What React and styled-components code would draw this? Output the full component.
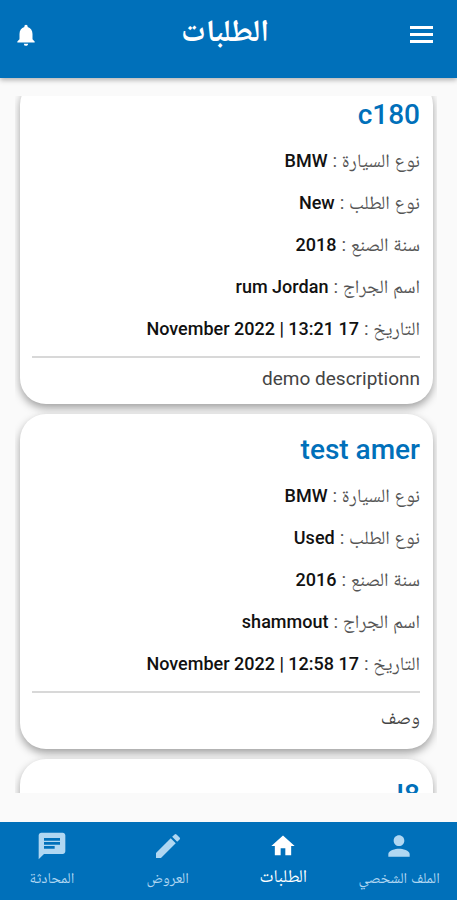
import React, { useLayoutEffect, useRef } from 'react';
import styled, { createGlobalStyle } from 'styled-components';
import { MdNotifications, MdChat, MdEdit, MdHome, MdPerson } from 'react-icons/md';

const GlobalStyle = createGlobalStyle`
  * { box-sizing: border-box; }
  body { margin: 0; background: #fafafa; font-family: Roboto, "Noto Naskh Arabic", "DejaVu Sans", sans-serif; }
`;

const Screen = styled.div`
  display: flex;
  flex-direction: column;
  height: 100vh;
  overflow: hidden;
  background: #fafafa;
`;

const TopBar = styled.header`
  display: grid;
  flex: none;
  grid-template-columns: 1fr auto 1fr;
  align-items: center;
  height: 78px;
  padding: 0 20px 9px 13px;
  background: #0070ba;
  color: #fff;
  box-shadow: 0 2px 5px rgba(0, 0, 0, 0.3);
`;

const IconButton = styled.button`
  display: flex;
  justify-self: ${({ $side }) => $side};
  padding: 0;
  border: 0;
  background: none;
  color: inherit;
  font-size: 26px;
  cursor: pointer;
`;

const PageTitle = styled.h1`
  margin: 0;
  padding-bottom: 8px;
  font-size: 31px;
  line-height: 40px;
  font-weight: 700;
`;

const OrderList = styled.main`
  display: flex;
  flex: 1;
  flex-direction: column;
  gap: 10px;
  min-height: 0;
  margin: 18px 20px 29px 15px;
  padding: 0 4px 0 5px;
  overflow-y: auto;
  scrollbar-width: none;
`;

const Card = styled.article`
  flex: none;
  padding: 12px 13px 12px 12px;
  border-radius: 26px;
  background: #fff;
  box-shadow: 0 4px 8px rgba(0, 0, 0, 0.36);
`;

const CardTitle = styled.h2`
  margin: 0 0 1px;
  font-size: 28px;
  line-height: 48px;
  font-weight: 500;
  color: #0070ba;
`;

const Details = styled.dl`
  margin: 0;
  padding-bottom: 6px;
`;

const Detail = styled.div`
  display: flex;
  align-items: center;
  gap: 5px;
  height: 42px;
  font-size: 18px;
  line-height: 42px;
  white-space: nowrap;
`;

const Label = styled.dt`
  color: #555;
  font-size: 19px;
`;

const Value = styled.dd`
  margin: 0;
  color: #111;
  font-weight: 500;
`;

const Description = styled.p`
  margin: 0;
  padding: ${({ $tall }) => ($tall ? '9px 0 3px' : '8px 0 0')};
  border-top: 2px solid #d8d8d8;
  color: #444;
  font-size: 19px;
  line-height: ${({ $tall }) => ($tall ? 32 : 26)}px;
`;

const BottomBar = styled.nav`
  display: grid;
  flex: none;
  grid-template-columns: repeat(4, 1fr);
  height: 78px;
  margin-left: -6px;
  background: #0070ba;
`;

const Tab = styled.a`
  display: flex;
  flex-direction: column;
  align-items: center;
  gap: 2px;
  padding-top: ${({ $active }) => ($active ? 10 : 8)}px;
  color: ${({ $active }) => ($active ? '#fff' : '#b0d7f2')};
  font-size: ${({ $active }) => ($active ? 18 : 15)}px;
  line-height: 28px;
  text-decoration: none;
  white-space: nowrap;

  svg {
    width: ${({ $active }) => ($active ? 28 : 32)}px;
    height: ${({ $active }) => ($active ? 28 : 32)}px;
  }
`;

const labels = ['نوع السيارة', 'نوع الطلب', 'سنة الصنع', 'اسم الجراج', 'التاريخ'];

const orders = [
  {
    title: 'c180',
    values: ['BMW', 'New', '2018', 'rum Jordan', '17 November 2022 | 13:21'],
    description: 'demo descriptionn',
  },
  {
    title: 'test amer',
    values: ['BMW', 'Used', '2016', 'shammout', '17 November 2022 | 12:58'],
    description: 'وصف',
    tall: true,
  },
  { title: 'I8', values: [], description: '' },
];

const tabs = [
  { name: 'الملف الشخصي', href: '#profile', Icon: MdPerson },
  { name: 'الطلبات', href: '#orders', Icon: MdHome, active: true },
  { name: 'العروض', href: '#offers', Icon: MdEdit },
  { name: 'المحادثة', href: '#chat', Icon: MdChat },
];

function MenuIcon() {
  return (
    <svg width="31" height="17" viewBox="0 0 31 17" fill="currentColor" aria-hidden="true">
      <path d="M4 0h23v3H4zM4 7h23v3H4zM4 14h23v3H4z" />
    </svg>
  );
}

function OrderCard({ title, values, description, tall }) {
  return (
    <Card>
      <CardTitle>{title}</CardTitle>
      <Details>
        {values.map((value, i) => (
          <Detail key={labels[i]}>
            <Label>{labels[i]} :</Label>
            <Value>{value}</Value>
          </Detail>
        ))}
      </Details>
      <Description $tall={tall}>{description}</Description>
    </Card>
  );
}

export default function App() {
  const list = useRef(null);

  useLayoutEffect(() => {
    list.current.scrollTop = 17;
  }, []);

  return (
    <Screen dir="rtl" lang="ar">
      <GlobalStyle />
      <TopBar>
        <IconButton $side="start" type="button" aria-label="القائمة"><MenuIcon /></IconButton>
        <PageTitle>الطلبات</PageTitle>
        <IconButton $side="end" type="button" aria-label="الإشعارات"><MdNotifications /></IconButton>
      </TopBar>
      <OrderList ref={list}>
        {orders.map((order) => <OrderCard key={order.title} {...order} />)}
      </OrderList>
      <BottomBar>
        {tabs.map(({ name, href, Icon, active }) => (
          <Tab key={name} href={href} $active={active} aria-current={active ? 'page' : undefined}>
            <Icon />
            <span>{name}</span>
          </Tab>
        ))}
      </BottomBar>
    </Screen>
  );
}
